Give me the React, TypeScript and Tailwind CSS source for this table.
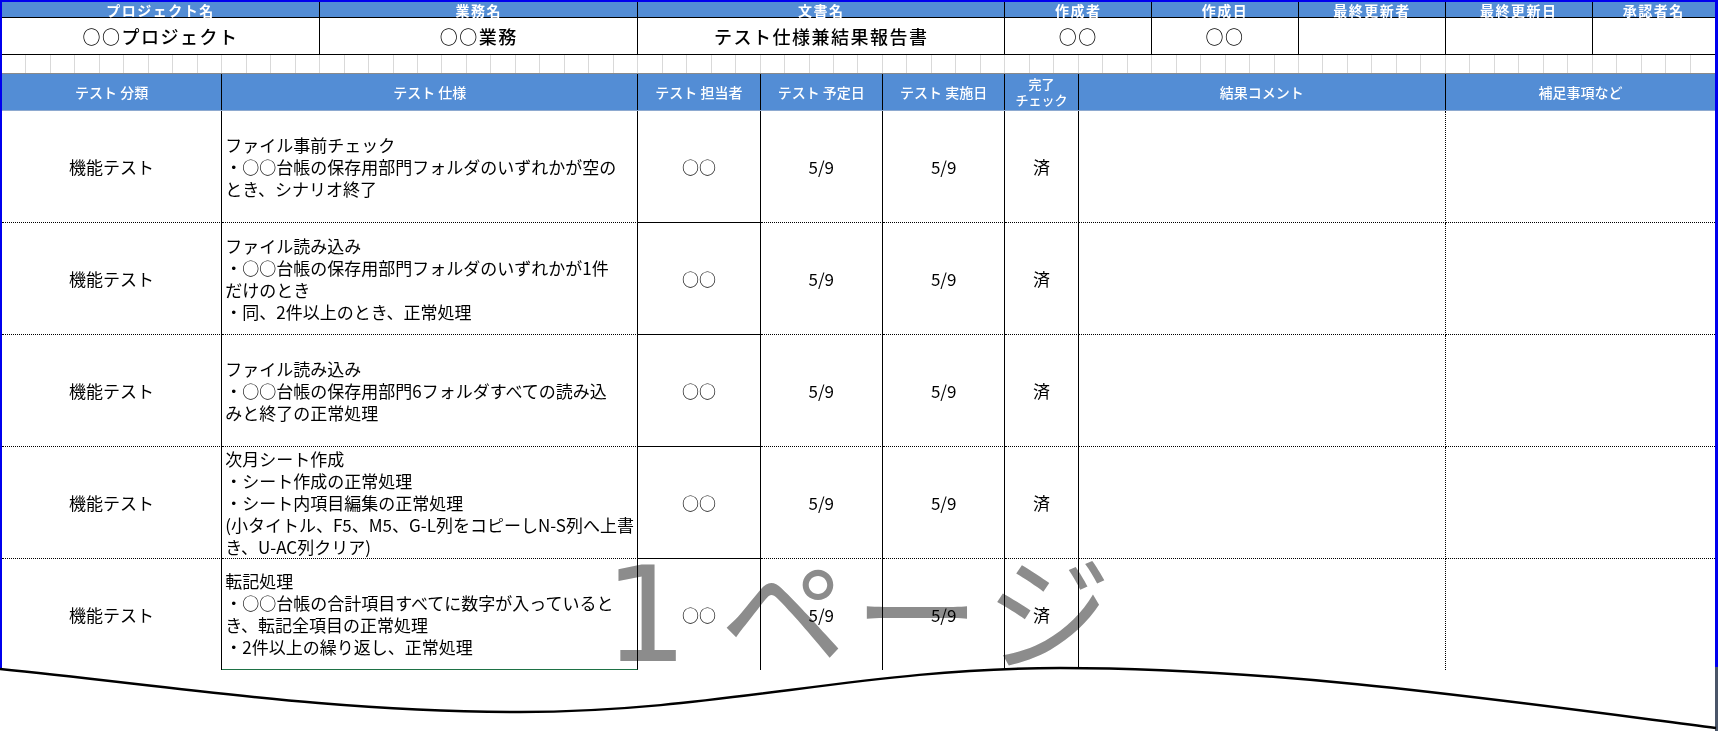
const headTop = [
  { label: 'プロジェクト名', value: '○○プロジェクト', span: 'col-span-13' },
  { label: '業務名', value: '○○業務', span: 'col-span-13' },
  { label: '文書名', value: 'テスト仕様兼結果報告書', span: 'col-span-15' },
  { label: '作成者', value: '○○', span: 'col-span-6' },
  { label: '作成日', value: '○○', span: 'col-span-6' },
  { label: '最終更新者', value: '', span: 'col-span-6' },
  { label: '最終更新日', value: '', span: 'col-span-6' },
  { label: '承認者名', value: '', span: 'col-span-5' },
];

const rows = [
  ['ファイル事前チェック', '・○○台帳の保存用部門フォルダのいずれかが空の', 'とき、シナリオ終了'],
  ['ファイル読み込み', '・○○台帳の保存用部門フォルダのいずれかが1件', 'だけのとき', '・同、2件以上のとき、正常処理'],
  ['ファイル読み込み', '・○○台帳の保存用部門6フォルダすべての読み込', 'みと終了の正常処理'],
  ['次月シート作成', '・シート作成の正常処理', '・シート内項目編集の正常処理', '(小タイトル、F5、M5、G-L列をコピーしN-S列へ上書', 'き、U-AC列クリア)'],
  ['転記処理', '・○○台帳の合計項目すべてに数字が入っていると', 'き、転記全項目の正常処理', '・2件以上の繰り返し、正常処理'],
];

const grid = 'grid grid-cols-[repeat(70,minmax(0,1fr))]';
const wave = 'M0 669 C 170 686, 330 712, 520 712 C 720 712, 860 668, 1060 668 C 1280 668, 1500 700, 1716 728';

export default function App() {
  return (
    <div className="relative w-[1721px] h-[732px] overflow-hidden bg-white text-black font-['Noto_Sans_CJK_JP',sans-serif]">
      <div className="w-[1718px] border-t-2 border-l-2 border-r-[3px] border-[#0000ee]">
        {/* 文書情報 */}
        <div className={`${grid} h-[16px] bg-[#538dd5]`}>
          {headTop.map(h => (
            <div key={h.label} className={`${h.span} flex items-center justify-center border-r border-b border-black last:border-r-0 text-[14px] leading-none font-bold tracking-[1.5px] text-white`}>
              {h.label}
            </div>
          ))}
        </div>
        <div className={`${grid} h-[37px]`}>
          {headTop.map(h => (
            <div key={h.label} className={`${h.span} flex items-center justify-center border-r border-b border-black last:border-r-0 text-[18px] font-medium tracking-[1.5px]`}>
              {h.value}
            </div>
          ))}
        </div>
        <div className={`${grid} h-[19px] border-b border-[#8a8a8a]`}>
          {Array.from({ length: 70 }).map((_, i) => (
            <div key={i} className="border-r border-[#d9d9d9] last:border-r-0" />
          ))}
        </div>

        {/* 表ヘッダー */}
        <div className={`${grid} h-[37px] bg-[#538dd5] border-b border-[#8eaad0] text-white text-[14px] font-medium`}>
          <div className="col-span-9 flex items-center justify-center border-r border-black">テスト 分類</div>
          <div className="col-span-17 flex items-center justify-center border-r border-black">テスト 仕様</div>
          <div className="col-span-5 flex items-center justify-center border-r border-black whitespace-nowrap">テスト 担当者</div>
          <div className="col-span-5 flex items-center justify-center border-r border-black whitespace-nowrap">テスト 予定日</div>
          <div className="col-span-5 flex items-center justify-center border-r border-black whitespace-nowrap">テスト 実施日</div>
          <div className="col-span-3 flex flex-col items-center justify-center border-r border-black text-[13px] leading-[16px]">
            <span>完了</span>
            <span>チェック</span>
          </div>
          <div className="col-span-15 flex items-center justify-center border-r border-black">結果コメント</div>
          <div className="col-span-11 flex items-center justify-center">補足事項など</div>
        </div>

        {/* テスト項目 */}
        {rows.map((spec, i) => {
          const last = i === rows.length - 1;
          const dot = last ? '' : 'border-b [border-bottom-style:dotted]';
          return (
            <div key={i} className={`${grid} ${last ? 'h-[111px]' : 'h-[112px]'} text-[17px]`}>
              <div className={`col-span-9 flex items-center justify-center border-r border-black ${dot}`}>機能テスト</div>
              <div className={`col-span-17 flex flex-col justify-center pl-[3px] border-r border-black leading-[22px] whitespace-nowrap ${last ? 'border-b border-b-[#1e7145]' : dot}`}>
                {spec.map(line => (
                  <span key={line}>{line}</span>
                ))}
              </div>
              <div className={`col-span-5 flex items-center justify-center border-r border-black ${last ? '' : 'border-b'}`}>○○</div>
              <div className={`col-span-5 flex items-center justify-center border-r border-black ${dot}`}>5/9</div>
              <div className={`col-span-5 flex items-center justify-center border-r border-black ${dot}`}>5/9</div>
              <div className={`col-span-3 flex items-center justify-center border-r border-black ${dot}`}>済</div>
              <div className={`col-span-15 border-r border-black [border-right-style:dotted] ${dot}`} />
              <div className={`col-span-11 ${dot}`} />
            </div>
          );
        })}
      </div>

      {/* 改ページプレビューの透かし */}
      <div className="pointer-events-none absolute left-[604px] top-[543px] flex items-baseline leading-none text-[#8c8c8c] mix-blend-multiply">
        <span className="text-[132px] font-['DejaVu_Sans',sans-serif]">1</span>
        <span className="ml-[32px] text-[126px] tracking-[8px] font-['Noto_Sans_CJK_JP',sans-serif]">ページ</span>
      </div>

      {/* 波線（省略） */}
      <svg className="pointer-events-none absolute left-0 top-0" width="1721" height="732" viewBox="0 0 1721 732">
        <path d={`${wave} L1721 732 L0 732 Z`} fill="#ffffff" />
        <rect x="1715" y="667" width="3" height="64" fill="#4a5568" />
        <path d={wave} fill="none" stroke="#000" strokeWidth="2.5" />
      </svg>
    </div>
  );
}
